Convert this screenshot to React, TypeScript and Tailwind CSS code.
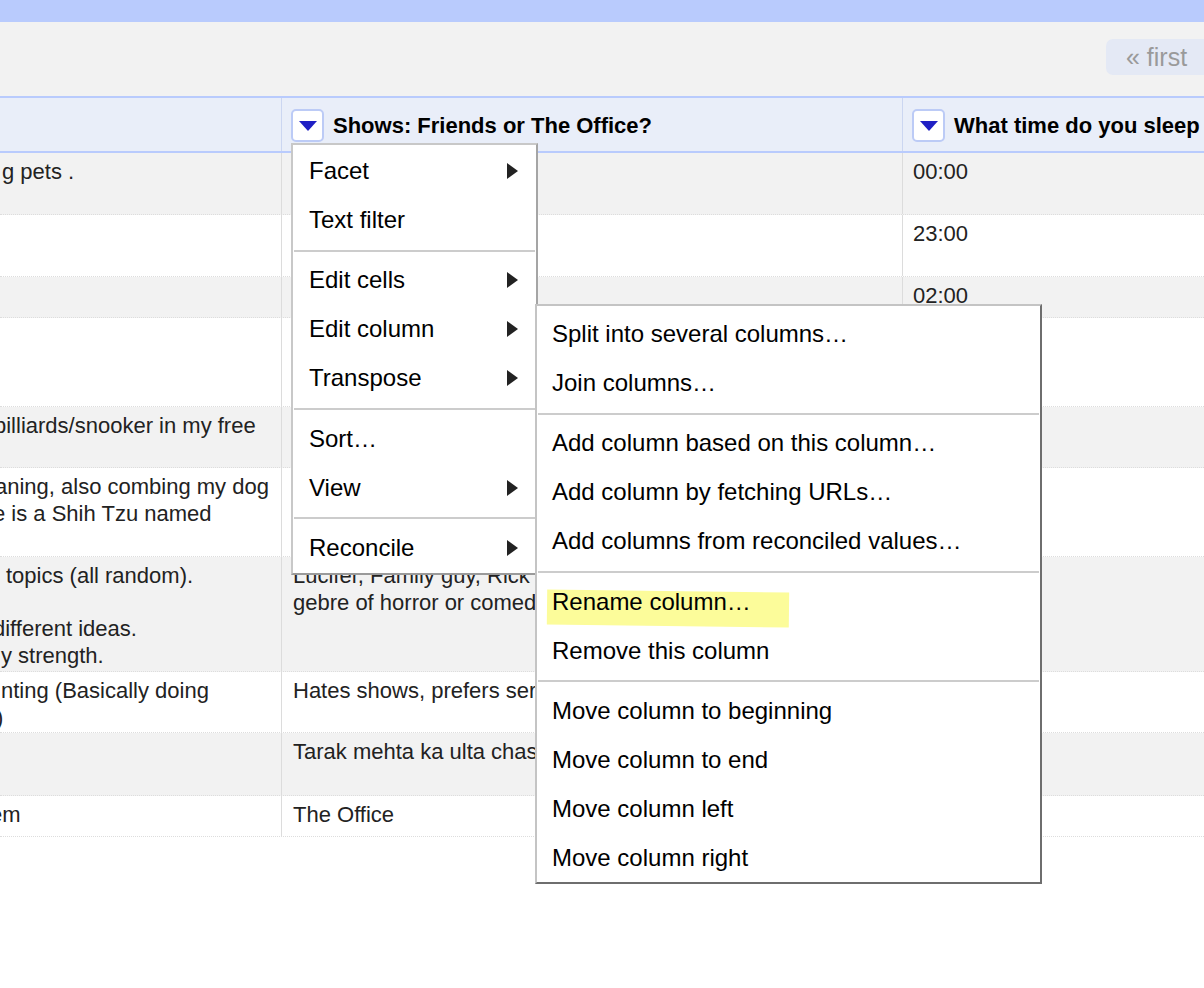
import React from "react";

type Line = [string, number];

type Row = {
  h: number;
  c1: Line[];
  c2: string[];
  c3?: string;
};

const rows: Row[] = [
  { h: 62, c1: [["g pets .", 2]], c2: [], c3: "00:00" },
  { h: 62, c1: [], c2: [], c3: "23:00" },
  { h: 41, c1: [], c2: [], c3: "02:00" },
  { h: 89, c1: [], c2: [] },
  { h: 61, c1: [["billiards/snooker in my free", -6]], c2: [] },
  {
    h: 89,
    c1: [
      ["aning, also combing my dog", -5],
      ["e is a Shih Tzu named", -7],
    ],
    c2: [],
  },
  {
    h: 115,
    c1: [
      ["topics (all random).", 6],
      ["\u00a0", 0],
      ["different ideas.", -7],
      ["y strength.", 1],
    ],
    c2: ["Lucifer, Family guy, Rick and Morty, any", "gebre of horror or comedy"],
  },
  {
    h: 61,
    c1: [
      ["nting (Basically doing", 1],
      [")", -4],
    ],
    c2: ["Hates shows, prefers series"],
  },
  { h: 63, c1: [], c2: ["Tarak mehta ka ulta chashma"] },
  { h: 41, c1: [["em", -10]], c2: ["The Office"] },
];

type Item = { label: string; sub?: boolean; mark?: boolean } | "sep";

const mainMenu: Item[] = [
  { label: "Facet", sub: true },
  { label: "Text filter" },
  "sep",
  { label: "Edit cells", sub: true },
  { label: "Edit column", sub: true },
  { label: "Transpose", sub: true },
  "sep",
  { label: "Sort…" },
  { label: "View", sub: true },
  "sep",
  { label: "Reconcile", sub: true },
];

const columnMenu: Item[] = [
  { label: "Split into several columns…" },
  { label: "Join columns…" },
  "sep",
  { label: "Add column based on this column…" },
  { label: "Add column by fetching URLs…" },
  { label: "Add columns from reconciled values…" },
  "sep",
  { label: "Rename column…", mark: true },
  { label: "Remove this column" },
  "sep",
  { label: "Move column to beginning" },
  { label: "Move column to end" },
  { label: "Move column left" },
  { label: "Move column right" },
];

function DropButton() {
  return (
    <div className="flex h-[33px] w-[33px] shrink-0 items-center justify-center rounded-[5px] border-2 border-[#bccbf6] bg-white">
      <svg width="18" height="10" viewBox="0 0 18 10">
        <polygon points="0,0 18,0 9,10" fill="#1f1fc4" />
      </svg>
    </div>
  );
}

function MenuList({ items, textPad }: { items: Item[]; textPad: string }) {
  return (
    <>
      {items.map((it, i) =>
        it === "sep" ? (
          <div key={i} className="mx-[1px] mb-[4.33px] mt-[5px] h-[2px] bg-[#cccccc]" />
        ) : (
          <div
            key={i}
            className={`relative flex h-[49px] items-center justify-between pr-[18px] ${textPad}`}
          >
            {it.mark ? (
              <div className="absolute left-[10px] top-[14px] h-[35px] w-[242px] rotate-[0.7deg] bg-[#fcfc9a]" />
            ) : null}
            <span className="relative whitespace-nowrap">{it.label}</span>
            {it.sub ? (
              <svg width="11" height="16" viewBox="0 0 11 16">
                <polygon points="0,0 11,8 0,16" fill="#222" />
              </svg>
            ) : null}
          </div>
        )
      )}
    </>
  );
}

export default function App() {
  return (
    <div className="relative h-[988px] w-[1204px] overflow-hidden bg-white font-['Liberation_Sans',Arial,sans-serif] text-[#222]">
      <div className="h-[22px] bg-[#b9cbfd]" />
      <div className="flex h-[74px] items-start justify-end bg-[#f2f2f2] pt-[17px]">
        <div className="flex h-[36px] w-[98px] items-center rounded-l-[7px] bg-[#e4e9f5] pl-[20px] pt-[2px] text-[25px] text-[#9a9a9a]">
          « first
        </div>
      </div>

      {/* header */}
      <div className="flex h-[57px] border-y-2 border-[#b9cbfd] bg-[#e9eef9]">
        <div className="w-[282px] shrink-0 border-r border-[#cbd6f1]" />
        <div className="flex w-[621px] shrink-0 items-center gap-[9px] border-r border-[#cbd6f1] pl-[9px] pt-[2px] text-[22px] font-bold text-black">
          <DropButton />
          <span className="whitespace-nowrap">Shows: Friends or The Office?</span>
        </div>
        <div className="flex min-w-0 flex-1 items-center gap-[9px] overflow-hidden pl-[9px] pt-[2px] text-[22px] font-bold text-black">
          <DropButton />
          <span className="whitespace-nowrap">What time do you sleep at night?</span>
        </div>
      </div>

      {/* body */}
      {rows.map((r, i) => (
        <div
          key={i}
          style={{ height: r.h }}
          className={`flex border-b border-dotted border-[#dddddd] text-[22px] leading-[26.5px] ${
            i % 2 === 0 ? "bg-[#f2f2f2]" : "bg-white"
          }`}
        >
          <div className="w-[282px] shrink-0 overflow-hidden border-r border-[#dcdcdc] pt-[6px]">
            {r.c1.map(([t, ml], j) => (
              <div key={j} className="whitespace-nowrap" style={{ marginLeft: ml }}>
                {t}
              </div>
            ))}
          </div>
          <div className="w-[621px] shrink-0 overflow-hidden border-r border-[#dcdcdc] pl-[11px] pt-[6px]">
            {r.c2.map((t, j) => (
              <div key={j} className="whitespace-nowrap">
                {t}
              </div>
            ))}
          </div>
          <div className="min-w-0 flex-1 pl-[10px] pt-[6px]">{r.c3}</div>
        </div>
      ))}

      {/* column dropdown menu */}
      <div className="absolute left-[291px] top-[143px] w-[247px] border-2 border-[#c8c8c8] border-b-[#9a9a9a] border-r-[#a5a5a5] bg-white pb-[1px] pt-[1.5px] text-[24px] text-black">
        <MenuList items={mainMenu} textPad="pl-[16px]" />
      </div>

      {/* edit column submenu */}
      <div className="absolute left-[535px] top-[304px] w-[507px] border-2 border-[#c4c4c4] border-b-[#6e6e6e] border-r-[#6e6e6e] bg-white pb-[0px] pt-[3.5px] text-[24px] text-black">
        <MenuList items={columnMenu} textPad="pl-[15px]" />
      </div>
    </div>
  );
}
